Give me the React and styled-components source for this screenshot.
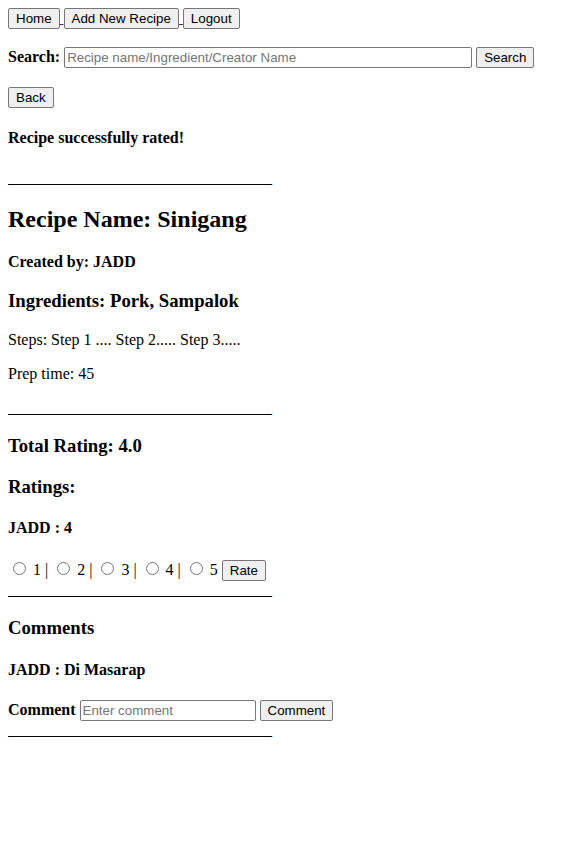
import React, { useState } from "react";
import styled, { createGlobalStyle } from "styled-components";

const Global = createGlobalStyle`
  body {
    margin: 8px;
    font-family: "Liberation Serif", "Times New Roman", serif;
    font-size: 16px;
    color: #000;
    background: #fff;
  }
`;

const Btn = styled.button`
  font-family: "Liberation Sans", Arial, sans-serif;
  font-size: 13.33px;
  padding: 2px 7px;
  background: #efefef;
  border: 1px solid #767676;
  border-radius: 2px;
  color: #000;
`;

const NavLink = styled.a`
  color: #551a8b;
  text-decoration: underline;
`;

const Field = styled.input`
  font-family: "Liberation Sans", Arial, sans-serif;
  font-size: 13.33px;
  padding: 2px 2px;
  border: 1px solid #767676;
  border-radius: 2px;
  width: ${(p) => p.$w}px;
  &::placeholder {
    color: #757575;
  }
`;

const Row = styled.form`
  margin: ${(p) => p.$top}px 0 ${(p) => p.$bottom}px;
`;

const Label = styled.b``;

const Line = styled.p`
  margin: 16px 0;
`;

const H2 = styled.h2`
  font-size: 24px;
  margin: 19.9px 0;
`;
const H3 = styled.h3`
  font-size: 18.72px;
  margin: 18.72px 0;
`;
const H4 = styled.h4`
  font-size: 16px;
  margin: 21.28px 0;
`;
const Byline = styled(H4)`
  margin: 19px 0 15px;
`;
const P = styled.p`
  margin: 16px 0;
`;

const Radio = styled.input`
  margin: 3px 3px 0 5px;
`;

const RULE = "_________________________________";

const Sep = () => <Line>{RULE}</Line>;

export default function App() {
  const [rate, setRate] = useState(null);
  return (
    <>
      <Global />
      <div>
        <NavLink href="#">
          <Btn>Home</Btn>{" "}
        </NavLink>
        <NavLink href="#">
          <Btn>Add New Recipe</Btn>{" "}
        </NavLink>
        <NavLink href="#">
          <Btn>Logout</Btn>
        </NavLink>
      </div>
      <Row $top={18} $bottom={19} onSubmit={(e) => e.preventDefault()}>
        <Label>Search:</Label>{" "}
        <Field $w={402} placeholder="Recipe name/Ingredient/Creator Name" />{" "}
        <Btn>Search</Btn>
      </Row>
      <div>
        <Btn>Back</Btn>
      </div>
      <H4>Recipe successfully rated!</H4>
      <Sep />
      <H2>Recipe Name: Sinigang</H2>
      <Byline>Created by: JADD</Byline>
      <H3>Ingredients: Pork, Sampalok</H3>
      <P>Steps: Step 1 .... Step 2..... Step 3.....</P>
      <P>Prep time: 45</P>
      <Sep />
      <H3>Total Rating: 4.0</H3>
      <H3>Ratings:</H3>
      <H4>JADD : 4</H4>
      <form onSubmit={(e) => e.preventDefault()}>
        {[1, 2, 3, 4, 5].map((n) => (
          <React.Fragment key={n}>
            <Radio
              type="radio"
              name="rate"
              checked={rate === n}
              onChange={() => setRate(n)}
            />{" "}
            {n}
            {n < 5 ? " | " : " "}
          </React.Fragment>
        ))}
        <Btn>Rate</Btn>
        <br />
        {RULE}
      </form>
      <H3>Comments</H3>
      <H4>JADD : Di Masarap</H4>
      <Row $top={16} $bottom={0} onSubmit={(e) => e.preventDefault()}>
        <Label>Comment</Label> <Field $w={170} placeholder="Enter comment" />{" "}
        <Btn>Comment</Btn>
        <br />
        {RULE}
      </Row>
    </>
  );
}
